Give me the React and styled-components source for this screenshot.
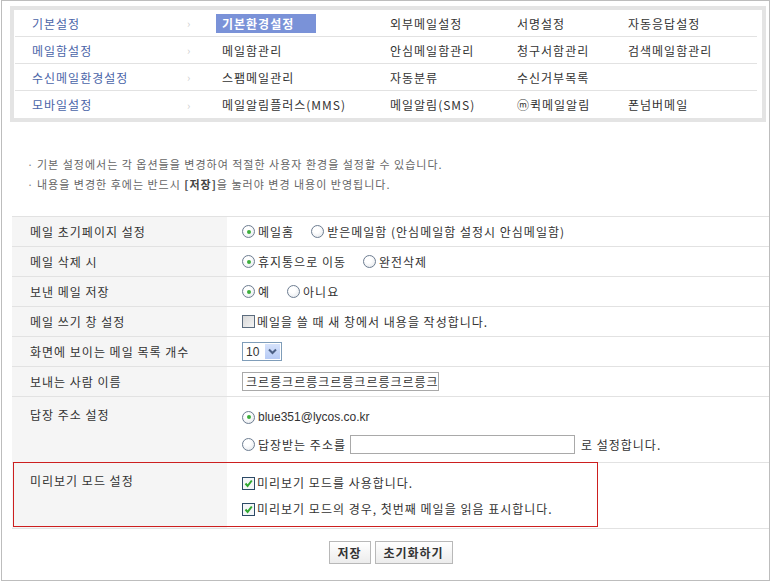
import styled, { createGlobalStyle } from 'styled-components';

const GlobalStyle = createGlobalStyle`
  body {
    margin: 0;
    background: #fff;
    font-family: 'Noto Sans CJK KR', 'Noto Sans', sans-serif;
    font-size: 12px;
    letter-spacing: 1px;
    color: #333;
  }
`;

const Frame = styled.div`
  width: 767px;
  height: 579px;
  margin-left: 1px;
  border: 1px solid #bdbdbd;
  box-sizing: content-box;
`;

const NavBox = styled.div`
  margin: 5px 3px 0 8px;
  border: 4px solid #e4e4e4;
  padding: 0 5px 0 1px;
  background: #fff;
`;

const NavRow = styled.div`
  display: grid;
  grid-template-columns: 172px 29px 174px 127px 111px 1fr;
  align-items: center;
  height: 27px;
  border-bottom: ${(p) => (p.last ? 'none' : '1px solid #e2e2e2')};
  box-sizing: border-box;
`;

const Category = styled.span`
  padding-left: 17px;
  color: #4a64a8;
`;

const Arrow = styled.span`
  color: #cfcfcf;
  font-size: 11px;
`;

const NavItem = styled.span`
  padding-left: ${(p) => (p.first ? '6px' : '0')};
  color: #333;
  white-space: nowrap;
  ${(p) =>
    p.active &&
    `
    width: 94px;
    background: #7a92d8;
    color: #fff;
    font-weight: bold;
    line-height: 19px;
  `}
`;

const Intro = styled.ul`
  list-style: none;
  margin: 0;
  padding: 32px 0 0 25px;
  height: 62px;
  box-sizing: content-box;
  li {
    color: #666;
    font-size: 11px;
    line-height: 20px;
    &::before {
      content: '·';
      display: inline-block;
      width: 10px;
      color: #888;
    }
  }
  b {
    color: #444;
  }
`;

const Table = styled.div`
  margin-left: 10px;
  border-top: 1px solid #e2e2e2;
`;

const Row = styled.div`
  display: grid;
  grid-template-columns: 215px 1fr;
  min-height: ${(p) => p.h || 30}px;
  border-bottom: 1px solid #e2e2e2;
  box-sizing: border-box;
  position: relative;
  ${(p) =>
    p.highlight &&
    `
    &::after {
      content: '';
      position: absolute;
      left: 1px;
      top: -1px;
      width: 583px;
      height: 63px;
      border: 1px solid #cc1f1f;
      pointer-events: none;
    }
  `}
`;

const Label = styled.div`
  background: #f5f5f5;
  padding: ${(p) => (p.top ? '10px' : '0')} 0 0 18px;
  display: flex;
  align-items: ${(p) => (p.top ? 'flex-start' : 'center')};
  line-height: 16px;
`;

const Value = styled.div`
  padding: ${(p) => (p.stack ? '12px 0 0 15px' : '0 0 0 15px')};
  display: flex;
  flex-direction: ${(p) => (p.stack ? 'column' : 'row')};
  align-items: ${(p) => (p.stack ? 'flex-start' : 'center')};
  gap: ${(p) => (p.stack ? '10px' : '0')};
`;

const Option = styled.label`
  display: inline-flex;
  align-items: center;
  margin-right: 17px;
  line-height: 16px;
  white-space: nowrap;
`;

const RadioMark = styled.span`
  width: 11px;
  height: 11px;
  border-radius: 50%;
  border: 1px solid #6d7d91;
  background: radial-gradient(circle at 40% 35%, #fff 30%, #dfe3e8 100%);
  margin-right: 3px;
  display: inline-flex;
  align-items: center;
  justify-content: center;
  flex-shrink: 0;
  &::after {
    content: '';
    width: 4px;
    height: 4px;
    border-radius: 50%;
    background: ${(p) => (p.checked ? '#3cae3c' : 'transparent')};
  }
`;

const CheckMark = styled.span`
  width: 11px;
  height: 11px;
  border: 1px solid ${(p) => (p.checked ? '#2c4a66' : '#5c6c7e')};
  background: ${(p) => (p.checked ? '#f4f6f8' : 'linear-gradient(135deg, #d8d8d8, #f4f4f4)')};
  margin-right: 2px;
  display: inline-flex;
  align-items: center;
  justify-content: center;
  flex-shrink: 0;
`;

const Latin = styled.span`
  font-family: 'Liberation Sans', Arial, sans-serif;
  letter-spacing: 0;
`;

const SelectBox = styled.span`
  display: inline-flex;
  align-items: center;
  height: 17px;
  width: 35px;
  border: 1px solid #7f9db9;
  padding-left: 3px;
  font-family: 'Liberation Sans', Arial, sans-serif;
  letter-spacing: 0;
  box-sizing: content-box;
  justify-content: space-between;
`;

const SelectBtn = styled.span`
  width: 15px;
  height: 15px;
  margin-right: 1px;
  background: linear-gradient(#d6e2fb, #b7cbf5);
  display: inline-flex;
  align-items: center;
  justify-content: center;
`;

const TextInput = styled.span`
  display: inline-block;
  width: ${(p) => p.w}px;
  height: 17px;
  border: 1px solid #a9a9a9;
  padding-left: 3px;
  line-height: 17px;
  overflow: hidden;
  white-space: nowrap;
  margin: ${(p) => p.m || 0};
  color: #333;
`;

const Buttons = styled.div`
  margin-left: 10px;
  display: flex;
  justify-content: center;
  gap: 4px;
  padding-top: 12px;
`;

const Button = styled.button`
  width: ${(p) => p.w}px;
  height: 23px;
  padding: 0;
  border: 1px solid #b8b8b8;
  background: linear-gradient(#ffffff, #ececec);
  font-family: 'Noto Sans CJK KR', sans-serif;
  font-size: 12px;
  letter-spacing: 1px;
  font-weight: bold;
  color: #333;
  line-height: 20px;
`;

const Radio = ({ checked, children }) => (
  <Option>
    <RadioMark checked={checked} />
    {children}
  </Option>
);

const Check = ({ checked, children }) => (
  <Option>
    <CheckMark checked={checked}>
      {checked && (
        <svg width="9" height="9" viewBox="0 0 9 9">
          <path d="M1.5 4.5 L3.6 7 L7.8 1.5" stroke="#2fa72f" strokeWidth="2" fill="none" />
        </svg>
      )}
    </CheckMark>
    {children}
  </Option>
);

const navRows = [
  ['기본설정', ['기본환경설정', '외부메일설정', '서명설정', '자동응답설정']],
  ['메일함설정', ['메일함관리', '안심메일함관리', '청구서함관리', '검색메일함관리']],
  ['수신메일환경설정', ['스팸메일관리', '자동분류', '수신거부목록', '']],
  ['모바일설정', ['메일알림플러스(MMS)', '메일알림(SMS)', 'ⓜ퀵메일알림', '폰넘버메일']],
];

export default function App() {
  return (
    <>
      <GlobalStyle />
      <Frame>
        <NavBox>
          {navRows.map(([cat, items], i) => (
            <NavRow key={cat} last={i === navRows.length - 1}>
              <Category>{cat}</Category>
              <Arrow>›</Arrow>
              {items.map((it, j) => (
                <NavItem key={j} first={j === 0} active={i === 0 && j === 0}>
                  {it}
                </NavItem>
              ))}
            </NavRow>
          ))}
        </NavBox>

        <Intro>
          <li>기본 설정에서는 각 옵션들을 변경하여 적절한 사용자 환경을 설정할 수 있습니다.</li>
          <li>
            내용을 변경한 후에는 반드시 <b>[저장]</b>을 눌러야 변경 내용이 반영됩니다.
          </li>
        </Intro>

        <Table>
          <Row>
            <Label>메일 초기페이지 설정</Label>
            <Value>
              <Radio checked>메일홈</Radio>
              <Radio>받은메일함 (안심메일함 설정시 안심메일함)</Radio>
            </Value>
          </Row>
          <Row>
            <Label>메일 삭제 시</Label>
            <Value>
              <Radio checked>휴지통으로 이동</Radio>
              <Radio>완전삭제</Radio>
            </Value>
          </Row>
          <Row>
            <Label>보낸 메일 저장</Label>
            <Value>
              <Radio checked>예</Radio>
              <Radio>아니요</Radio>
            </Value>
          </Row>
          <Row>
            <Label>메일 쓰기 창 설정</Label>
            <Value>
              <Check>메일을 쓸 때 새 창에서 내용을 작성합니다.</Check>
            </Value>
          </Row>
          <Row>
            <Label>화면에 보이는 메일 목록 개수</Label>
            <Value>
              <SelectBox>
                10
                <SelectBtn>
                  <svg width="9" height="7" viewBox="0 0 9 7">
                    <path d="M1 1.5 L4.5 5 L8 1.5" stroke="#4d6185" strokeWidth="2" fill="none" />
                  </svg>
                </SelectBtn>
              </SelectBox>
            </Value>
          </Row>
          <Row>
            <Label>보내는 사람 이름</Label>
            <Value>
              <TextInput w={192}>크르릉크르릉크르릉크르릉크르릉크르릉</TextInput>
            </Value>
          </Row>
          <Row h={66}>
            <Label top>답장 주소 설정</Label>
            <Value stack>
              <Radio checked>
                <Latin>blue351@lycos.co.kr</Latin>
              </Radio>
              <Option>
                <RadioMark />
                답장받는 주소를
                <TextInput w={220} m="0 6px 0 4px" />
                로 설정합니다.
              </Option>
            </Value>
          </Row>
          <Row h={66} highlight>
            <Label top>미리보기 모드 설정</Label>
            <Value stack>
              <Check checked>미리보기 모드를 사용합니다.</Check>
              <Check checked>미리보기 모드의 경우, 첫번째 메일을 읽음 표시합니다.</Check>
            </Value>
          </Row>
        </Table>

        <Buttons>
          <Button w={42}>저장</Button>
          <Button w={78}>초기화하기</Button>
        </Buttons>
      </Frame>
    </>
  );
}
